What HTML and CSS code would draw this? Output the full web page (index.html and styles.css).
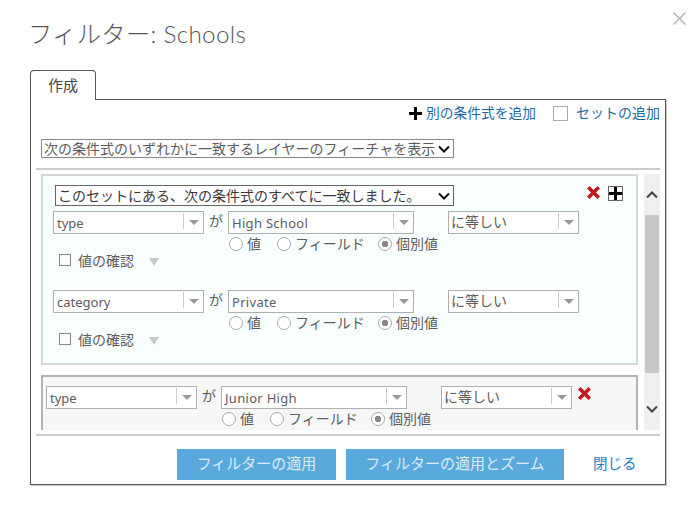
FILE: index.html
```html
<!DOCTYPE html>
<html lang="ja">
<head>
<meta charset="utf-8">
<title>フィルター: Schools</title>
<link rel="stylesheet" href="styles.css">
</head>
<body>
<main class="dialog">
  <svg class="close" width="13" height="13" viewBox="0 0 13 13"><path d="M.5.5l12 12M12.5.5l-12 12" stroke="#b0b0b0" stroke-width="1.3" fill="none"/></svg>
  <h1 class="title">フィルター: Schools</h1>
  <div class="tabs"><div class="tab">作成</div></div>
  <section class="panel">
    <div class="toolbar">
      <svg class="add-icon" width="13" height="13" viewBox="0 0 13 13"><path d="M5 0h3v5h5v3H8v5H5V8H0V5h5z" fill="#000"/></svg>
      <a class="link link-add">別の条件式を追加</a>
      <input class="check check-set" type="checkbox">
      <a class="link">セットの追加</a>
    </div>
    <select class="native native-main"><option>次の条件式のいずれかに一致するレイヤーのフィーチャを表示</option></select>
    <div class="rule-line rule-line-top"></div>
    <div class="scroller">
      <div class="list">
        <div class="set">
          <div class="set-head">
            <select class="native native-set"><option>このセットにある、次の条件式のすべてに一致しました。</option></select>
            <svg class="del del-set" width="13" height="13" viewBox="0 0 13 13"><path d="M2.5 0L6.5 4 10.5 0 13 2.5 9 6.5 13 10.5 10.5 13 6.5 9 2.5 13 0 10.5 4 6.5 0 2.5z" fill="#c5161c"/></svg>
            <svg class="add-box" width="15" height="15" viewBox="0 0 15 15"><rect x=".5" y=".5" width="14" height="14" fill="#fff" stroke="#666"/><path d="M6 1h3v5h5v3H9v5H6V9H1V6h5z" fill="#000"/></svg>
          </div>
          <div class="rule">
            <div class="fields">
              <div class="combo combo-field"><span class="combo-text">type</span><span class="combo-btn"></span></div>
              <span class="ga">が</span>
              <div class="combo combo-value"><span class="combo-text">High School</span><span class="combo-btn"></span></div>
              <div class="combo combo-op"><span class="combo-text op-text">に等しい</span><span class="combo-btn"></span></div>
            </div>
            <div class="radios">
              <label class="radio radio-a"><input type="radio" name="r1">値</label>
              <label class="radio radio-b"><input type="radio" name="r1">フィールド</label>
              <label class="radio"><input type="radio" name="r1" checked>個別値</label>
            </div>
            <div class="verify"><input class="check check-small" type="checkbox"><span>値の確認</span><i class="tri"></i></div>
          </div>
          <div class="rule">
            <div class="fields">
              <div class="combo combo-field"><span class="combo-text">category</span><span class="combo-btn"></span></div>
              <span class="ga">が</span>
              <div class="combo combo-value"><span class="combo-text">Private</span><span class="combo-btn"></span></div>
              <div class="combo combo-op"><span class="combo-text op-text">に等しい</span><span class="combo-btn"></span></div>
            </div>
            <div class="radios">
              <label class="radio radio-a"><input type="radio" name="r2">値</label>
              <label class="radio radio-b"><input type="radio" name="r2">フィールド</label>
              <label class="radio"><input type="radio" name="r2" checked>個別値</label>
            </div>
            <div class="verify"><input class="check check-small" type="checkbox"><span>値の確認</span><i class="tri"></i></div>
          </div>
        </div>
        <div class="single">
          <div class="rule">
            <div class="fields">
              <div class="combo combo-field"><span class="combo-text">type</span><span class="combo-btn"></span></div>
              <span class="ga">が</span>
              <div class="combo combo-value"><span class="combo-text">Junior High</span><span class="combo-btn"></span></div>
              <div class="combo combo-op"><span class="combo-text op-text">に等しい</span><span class="combo-btn"></span></div>
              <svg class="del del-rule" width="13" height="13" viewBox="0 0 13 13"><path d="M2.5 0L6.5 4 10.5 0 13 2.5 9 6.5 13 10.5 10.5 13 6.5 9 2.5 13 0 10.5 4 6.5 0 2.5z" fill="#c5161c"/></svg>
            </div>
            <div class="radios">
              <label class="radio radio-a"><input type="radio" name="r3">値</label>
              <label class="radio radio-b"><input type="radio" name="r3">フィールド</label>
              <label class="radio"><input type="radio" name="r3" checked>個別値</label>
            </div>
          </div>
        </div>
      </div>
      <div class="scrollbar">
        <div class="sb-btn"><svg width="12" height="8" viewBox="0 0 12 8"><path d="M1 6.5l5-5 5 5" fill="none" stroke="#444" stroke-width="2"/></svg></div>
        <div class="sb-thumb"></div>
        <div class="sb-end"><svg width="12" height="8" viewBox="0 0 12 8"><path d="M1 1.5l5 5 5-5" fill="none" stroke="#444" stroke-width="2"/></svg></div>
      </div>
    </div>
    <div class="rule-line rule-line-bottom"></div>
    <div class="footer">
      <button class="btn btn-apply">フィルターの適用</button>
      <button class="btn btn-zoom">フィルターの適用とズーム</button>
      <a class="close-link">閉じる</a>
    </div>
  </section>
</main>
</body>
</html>
```
FILE: styles.css
```css
* { box-sizing: border-box; }
html, body { margin: 0; padding: 0; background: #fff; }
body {
  font-family: "Noto Sans", "Noto Sans CJK JP", sans-serif;
  font-size: 14px;
  color: #5c5c5c;
}
.dialog {
  position: relative;
  width: 696px;
  height: 512px;
  padding: 0 30px;
}
.close { position: absolute; left: 673px; top: 12px; }
.title {
  margin: 0 0 0 -2px;
  height: 70px;
  padding-top: 17px;
  font-family: Lato, "Noto Sans CJK JP", sans-serif;
  font-size: 24.3px;
  line-height: 34px;
  font-weight: 300;
  color: #555;
  letter-spacing: .3px;
}
.tabs { display: flex; height: 29px; position: relative; z-index: 1; }
.tab {
  width: 66px;
  height: 30px;
  border: 1px solid #555;
  border-bottom: 0;
  border-radius: 4px 4px 0 0;
  background: #fff;
  text-align: center;
  line-height: 29px;
  font-size: 15px;
  color: #444;
}
.panel {
  width: 636px;
  height: 386px;
  border: 1px solid #555;
  padding: 0 5px;
  box-shadow: 1px 1px 1px #ccc;
  display: flex;
  flex-direction: column;
}
.toolbar {
  height: 26px;
  flex: none;
  display: flex;
  align-items: center;
  justify-content: flex-end;
  font-size: 14px;
}
.add-icon { margin-right: 4px; }
.link { color: #1f6ba0; white-space: nowrap; line-height: 20px; }
.link-add { margin-right: 17px; font-size: 13.75px; }
.check {
  appearance: none;
  margin: 0;
  background: #fff;
  border: 1px solid #aaa;
}
.check-set { width: 15px; height: 15px; margin-right: 8px; }
.native {
  appearance: none;
  display: block;
  flex: none;
  font: 14px "Noto Sans", "Noto Sans CJK JP", sans-serif;
  color: #5c5c5c;
  padding: 0 0 0 2px;
  border-radius: 0;
  background: #fff url("data:image/svg+xml,%3Csvg xmlns='http://www.w3.org/2000/svg' width='12' height='8'%3E%3Cpath d='M1 1.5l5 5 5-5' fill='none' stroke='%23111' stroke-width='2'/%3E%3C/svg%3E") no-repeat right 3px center;
}
.native-main {
  margin: 13px 0 0 5px;
  width: 413px;
  height: 19px;
  line-height: 17px;
  border: 1px solid #888;
}
.native-set {
  width: 399px;
  height: 21px;
  border: 1px solid #666;
  color: #3a3a3a;
  margin-left: 12px;
}
.rule-line { flex: none; height: 2px; background: #ccc; }
.rule-line-top { margin-top: 10px; }
.rule-line-bottom { margin-top: 4px; }
.scroller {
  flex: none;
  margin: 4px 0 0 5px;
  height: 256px;
  display: flex;
  gap: 6px;
}
.list { width: 597px; overflow: hidden; }
.set {
  height: 191px;
  border: 2px solid #d4d8d8;
  background: #f9ffff;
  padding: 9px 0 0;
}
.set-head { display: flex; align-items: flex-start; height: 26px; }
.del { flex: none; }
.del-set { margin: 1px 0 0 133px; }
.add-box { margin: 1px 0 0 8px; flex: none; }
.set .rule { padding-left: 10px; height: 79px; }
.single {
  margin-top: 10px;
  height: 70px;
  border: 2px solid #b4b4b4;
  border-bottom: 0;
  background: #f6f7f7;
  padding: 9px 0 0 3px;
}
.fields { display: flex; align-items: flex-start; height: 23px; }
.combo {
  display: flex;
  height: 23px;
  border: 1px solid #b0b0b0;
  background: #fff;
  flex: none;
}
.combo-field { width: 151px; }
.combo-value { width: 186px; }
.combo-value .combo-text { letter-spacing: .3px; }
.combo-op { width: 131px; margin-left: 34px; }
.combo-text {
  flex: 1;
  padding-left: 3px;
  font-size: 13px;
  line-height: 22px;
  color: #5c5c5c;
  white-space: nowrap;
}
.op-text { font-size: 14px; padding-left: 2px; line-height: 20px; }
.combo-btn {
  flex: none;
  width: 20px;
  margin: 1px 0 4px;
  border-left: 1px solid #ccc;
  position: relative;
}
.combo-btn::after {
  content: "";
  position: absolute;
  left: 5px;
  top: 7px;
  border: 5px solid transparent;
  border-top: 5px solid #999;
  border-bottom: 0;
}
.ga { width: 24px; flex: none; text-align: center; font-size: 14px; line-height: 20px; }
.del-rule { margin: 1px 0 0 6px; }
.radios {
  display: flex;
  height: 19px;
  margin-left: 176px;
  align-items: center;
  font-size: 14px;
  line-height: 18px;
}
.radio { display: flex; align-items: center; white-space: nowrap; }
.radio input {
  appearance: none;
  margin: 0 4px 0 0;
  width: 14px;
  height: 14px;
  border: 1px solid #aaa;
  border-radius: 50%;
  background: #fff;
}
.radio input:checked { background: radial-gradient(circle, #888 0 3px, #fff 3.5px); }
.radio-a { width: 48px; }
.radio-b { width: 101px; }
.verify {
  display: flex;
  align-items: center;
  margin: 1px 0 0 6px;
  height: 12px;
  font-size: 14px;
}
.check-small { width: 12px; height: 12px; margin-right: 7px; border-color: #888; }
.tri {
  margin: 4px 0 0 15px;
  border: 5px solid transparent;
  border-top: 8px solid #c4c8c8;
  border-bottom: 0;
}
.scrollbar {
  width: 16px;
  flex: none;
  background: #f0f0f0;
  display: flex;
  flex-direction: column;
  align-items: center;
}
.sb-btn { height: 41px; flex: none; padding-top: 17px; line-height: 0; }
.sb-thumb { width: 14px; height: 158px; flex: none; background: #c8c8c8; }
.sb-end { height: 57px; flex: none; padding-top: 32px; line-height: 0; }
.footer {
  display: flex;
  align-items: flex-start;
  padding: 13px 0 0 141px;
}
.btn {
  height: 31px;
  border: 0;
  border-radius: 0;
  background: #5aa9dc;
  color: #dcecf6;
  font: 15px/29px "Noto Sans", "Noto Sans CJK JP", sans-serif;
  padding: 0 0 2px;
}
.btn-apply { width: 159px; }
.btn-zoom { width: 218px; margin-left: 10px; }
.close-link { margin-left: 29px; color: #1a7fc5; font-size: 14.5px; line-height: 29px; }
```
